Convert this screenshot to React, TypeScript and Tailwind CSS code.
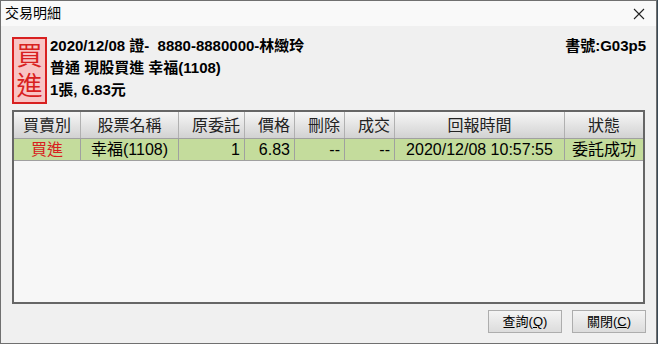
const cols = [
  { w: "w-[67px]", head: "買賣別", align: "text-center" },
  { w: "w-[98px]", head: "股票名稱", align: "text-center" },
  { w: "w-[66px]", head: "原委託", align: "text-right" },
  { w: "w-[50px]", head: "價格", align: "text-right" },
  { w: "w-[50px]", head: "刪除", align: "text-right" },
  { w: "w-[50px]", head: "成交", align: "text-right" },
  { w: "w-[170px]", head: "回報時間", align: "text-center" },
  { w: "flex-1", head: "狀態", align: "text-center" },
];

const row = ["買進", "幸福(1108)", "1", "6.83", "--", "--", "2020/12/08 10:57:55", "委託成功"];

const font = { fontFamily: '"Liberation Sans", "Noto Sans CJK TC", sans-serif' };

const App = () => {
  return (
    <div className="w-[658px] h-[344px] bg-[#3b4a55]" style={font}>
      <div className="w-[657px] h-[344px] flex flex-col border border-[#707070] bg-[#f0f0f0]">
        {/* title bar */}
        <div className="h-[25px] flex items-center justify-between bg-[#f9f9f9] pl-[4px] pr-[10px]">
          <span className="text-[14px] text-black">交易明細</span>
          <svg width="12" height="12" viewBox="0 0 12 12" className="mr-[1px]">
            <path d="M1 1L11 11M11 1L1 11" stroke="#222" strokeWidth="1.1" />
          </svg>
        </div>

        {/* header info */}
        <div className="flex pl-[11px] pr-[10px] pt-[11px]">
          <div className="w-[35px] h-[67px] border-2 border-[#d82020] bg-[#f8c4c4] flex flex-col items-center justify-center text-[#d82020] text-[26px] leading-[30px]">
            <span>買</span>
            <span>進</span>
          </div>
          <div className="ml-[3px] flex flex-col font-bold text-[15px] leading-[22px] text-black -mt-[2px]">
            <span>2020/12/08 證-&nbsp;&nbsp;8880-8880000-林緻玲</span>
            <span>普通 現股買進 幸福(1108)</span>
            <span>1張, 6.83元</span>
          </div>
          <div className="ml-auto font-bold text-[15px] leading-[22px] -mt-[2px] text-black">書號:G03p5</div>
        </div>

        {/* table */}
        <div className="mx-[11px] mt-[6px] h-[194px] border-2 border-[#666] bg-[#f7f7f7] flex flex-col">
          <div className="h-[27px] flex bg-gradient-to-b from-[#f6f6f6] to-[#d2d2d2] border-b border-[#a0a0a0]">
            {cols.map((c, i) => (
              <div
                key={i}
                className={`${c.w} ${c.align} border-r border-[#b0b0b0] last:border-r-0 px-[4px] text-[16px] leading-[27px] text-[#222]`}
              >
                {c.head}
              </div>
            ))}
          </div>
          <div className="h-[22px] flex bg-[#c4dc9c] border-b border-[#a0a0a0]">
            {cols.map((c, i) => (
              <div
                key={i}
                className={`${c.w} ${c.align} border-r border-[#a0a0a0] last:border-r-0 px-[4px] text-[16px] leading-[21px] ${i === 0 ? "text-[#d82020]" : "text-black"}`}
              >
                {row[i]}
              </div>
            ))}
          </div>
        </div>

        {/* buttons */}
        <div className="flex justify-end gap-[10px] pr-[10px] mt-[6px]">
          <button className="w-[74px] h-[23px] border border-[#adadad] bg-gradient-to-b from-[#f4f4f4] to-[#dcdcdc] text-[13px] text-black">
            查詢(<span className="underline">Q</span>)
          </button>
          <button className="w-[74px] h-[23px] border border-[#adadad] bg-gradient-to-b from-[#f4f4f4] to-[#dcdcdc] text-[13px] text-black">
            關閉(<span className="underline">C</span>)
          </button>
        </div>
      </div>
    </div>
  );
};

export default App;
